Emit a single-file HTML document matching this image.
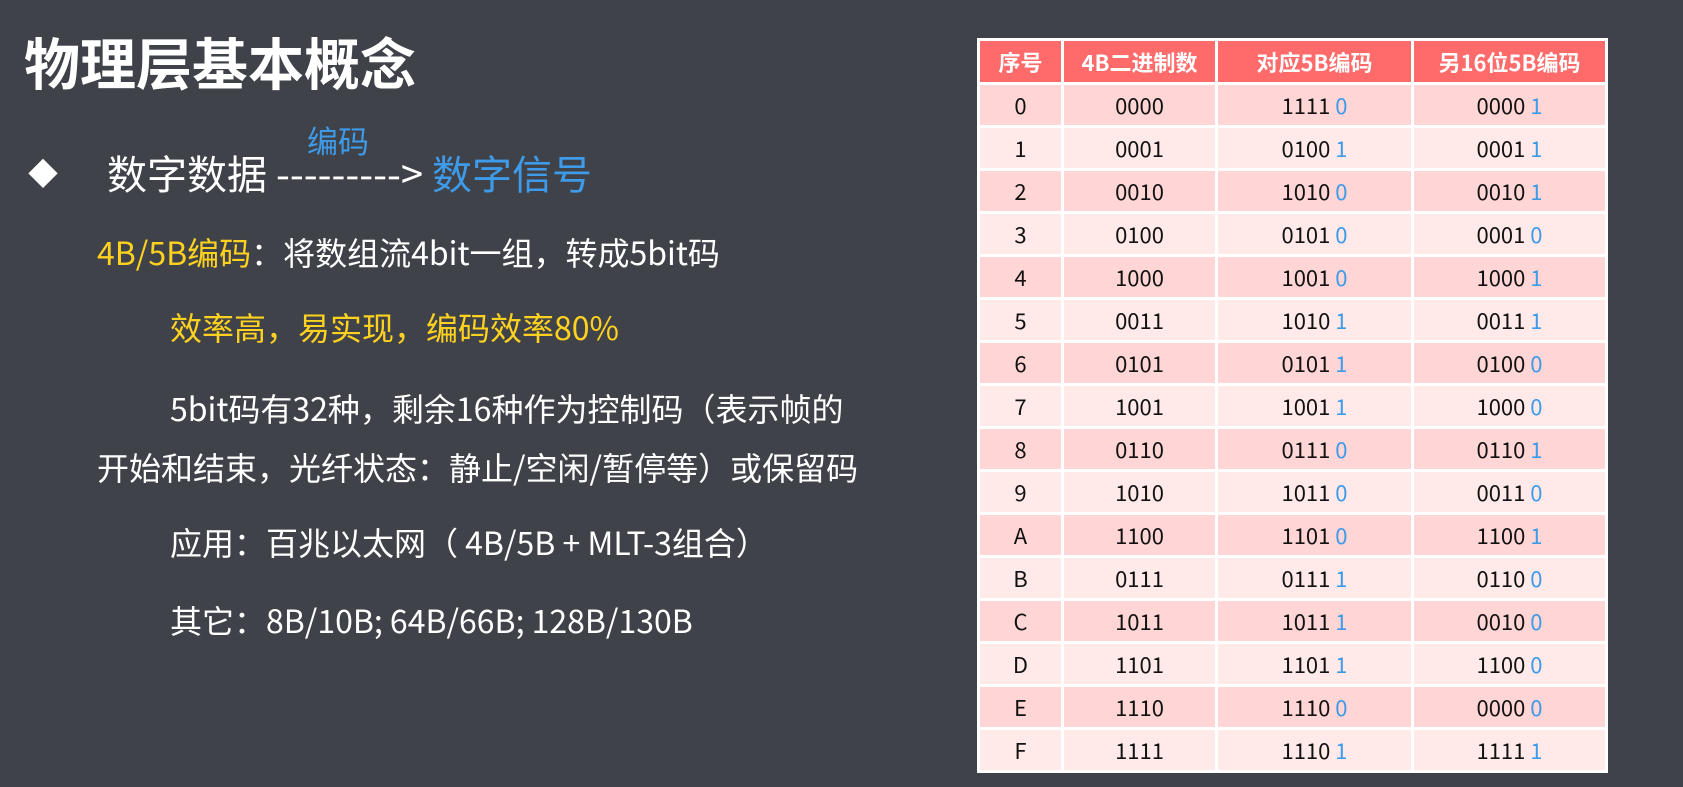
<!DOCTYPE html>
<html><head><meta charset="utf-8"><style>
html,body{margin:0;padding:0}
body{width:1683px;height:787px;background:#3f4249;position:relative;overflow:hidden;font-family:"Liberation Sans","Noto Sans CJK SC",sans-serif;color:#fff}
.t{position:absolute;white-space:nowrap;font-family:"Noto Sans CJK SC","Liberation Sans",sans-serif;line-height:1}
.y{color:#ffd21f}.b{color:#3d9be9}
table{position:absolute;left:977px;top:38px;width:631px;border-collapse:collapse;background:#fff;font-family:"Noto Sans CJK SC",sans-serif}
td,th{border:3px solid #fff;text-align:center;padding:0;height:40px;font-size:22px;color:#111;font-weight:400}
th{background:#ff6b6b;color:#fff;font-weight:700;font-size:22px;height:41px}
tr:nth-child(even) td{background:#ffd5d5}
tr:nth-child(odd) td{background:#ffe9e9}
td span{color:#3d9be9}
</style></head><body>
<div class="t" style="left:24px;top:34px;font-size:56px;font-weight:700">物理层基本概念</div>
<div class="t" style="left:28px;top:157px;font-size:30px">◆</div>
<div class="t" style="left:107px;top:152px;font-size:40px">数字数据 ---------&gt; <span class="b">数字信号</span></div>
<div class="t b" style="left:307px;top:124px;font-size:31px">编码</div>
<div class="t" style="left:97px;top:236px;font-size:32px"><span class="y">4B/5B编码</span>：将数组流4bit一组，转成5bit码</div>
<div class="t y" style="left:170px;top:311px;font-size:32px">效率高，易实现，编码效率80%</div>
<div class="t" style="left:170px;top:392px;font-size:32px">5bit码有32种，剩余16种作为控制码（表示帧的</div>
<div class="t" style="left:97px;top:451px;font-size:32px">开始和结束，光纤状态：静止/空闲/暂停等）或保留码</div>
<div class="t" style="left:170px;top:526px;font-size:32px">应用：百兆以太网（ 4B/5B + MLT-3组合）</div>
<div class="t" style="left:170px;top:604px;font-size:32px">其它：8B/10B; 64B/66B; 128B/130B</div>
<table>
<tr><th style="width:81px">序号</th><th style="width:151px">4B二进制数</th><th style="width:193px">对应5B编码</th><th>另16位5B编码</th></tr>
<tr><td>0</td><td>0000</td><td>1111 <span>0</span></td><td>0000 <span>1</span></td></tr>
<tr><td>1</td><td>0001</td><td>0100 <span>1</span></td><td>0001 <span>1</span></td></tr>
<tr><td>2</td><td>0010</td><td>1010 <span>0</span></td><td>0010 <span>1</span></td></tr>
<tr><td>3</td><td>0100</td><td>0101 <span>0</span></td><td>0001 <span>0</span></td></tr>
<tr><td>4</td><td>1000</td><td>1001 <span>0</span></td><td>1000 <span>1</span></td></tr>
<tr><td>5</td><td>0011</td><td>1010 <span>1</span></td><td>0011 <span>1</span></td></tr>
<tr><td>6</td><td>0101</td><td>0101 <span>1</span></td><td>0100 <span>0</span></td></tr>
<tr><td>7</td><td>1001</td><td>1001 <span>1</span></td><td>1000 <span>0</span></td></tr>
<tr><td>8</td><td>0110</td><td>0111 <span>0</span></td><td>0110 <span>1</span></td></tr>
<tr><td>9</td><td>1010</td><td>1011 <span>0</span></td><td>0011 <span>0</span></td></tr>
<tr><td>A</td><td>1100</td><td>1101 <span>0</span></td><td>1100 <span>1</span></td></tr>
<tr><td>B</td><td>0111</td><td>0111 <span>1</span></td><td>0110 <span>0</span></td></tr>
<tr><td>C</td><td>1011</td><td>1011 <span>1</span></td><td>0010 <span>0</span></td></tr>
<tr><td>D</td><td>1101</td><td>1101 <span>1</span></td><td>1100 <span>0</span></td></tr>
<tr><td>E</td><td>1110</td><td>1110 <span>0</span></td><td>0000 <span>0</span></td></tr>
<tr><td>F</td><td>1111</td><td>1110 <span>1</span></td><td>1111 <span>1</span></td></tr>
</table>
</body></html>
